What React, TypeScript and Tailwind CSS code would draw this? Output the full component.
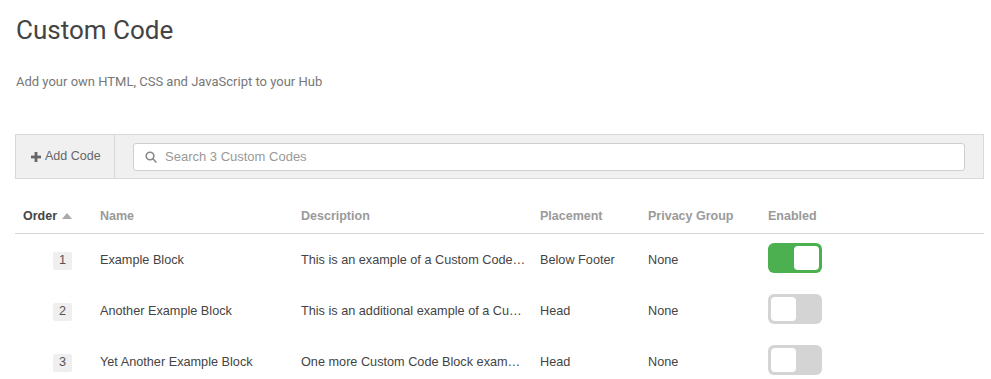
import React from "react";

const rows = [
  { order: 1, name: "Example Block", description: "This is an example of a Custom Code…", placement: "Below Footer", group: "None", enabled: true },
  { order: 2, name: "Another Example Block", description: "This is an additional example of a Cu…", placement: "Head", group: "None", enabled: false },
  { order: 3, name: "Yet Another Example Block", description: "One more Custom Code Block exam…", placement: "Head", group: "None", enabled: false },
];

function Toggle({ on }: { on: boolean }) {
  return (
    <div
      className={`mb-[6px] flex h-[30px] w-[54px] items-center rounded-[6px] p-[3px] ${
        on ? "justify-end bg-[#4caf50]" : "justify-start bg-[#d4d4d4]"
      }`}
    >
      <div className="h-[24px] w-[25px] rounded-[4px] bg-white" />
    </div>
  );
}

export default function App() {
  return (
    <div
      className="min-h-screen bg-white pl-[15px] pr-[7px] pt-[15px] text-[13px] text-[#444]"
      style={{ fontFamily: '"Liberation Sans", Arial, sans-serif' }}
    >
      <h1 className="pl-[1px] text-[26px] leading-[30px] text-[#444]" style={{ fontFamily: "Roboto, sans-serif" }}>
        Custom Code
      </h1>
      <p className="mt-[29px] pl-[1px] text-[13px] leading-[16px] text-[#777]" style={{ fontFamily: "Roboto, sans-serif" }}>
        Add your own HTML, CSS and JavaScript to your Hub
      </p>

      <div className="mt-[44px] flex h-[45px] items-stretch border border-[#d9d9d9] bg-[#f0f0f0]">
        <button className="flex w-[99px] items-center gap-[4px] border-r border-[#d9d9d9] pl-[15px] text-[12.5px] text-[#666]">
          <svg width="10" height="10" viewBox="0 0 10 10" className="mt-[1px]">
            <rect x="3.6" y="0" width="2.8" height="10" fill="#666" />
            <rect x="0" y="3.6" width="10" height="2.8" fill="#666" />
          </svg>
          Add Code
        </button>
        <div className="flex flex-1 items-center pl-[18px] pr-[18px]">
          <div className="flex h-[28px] w-full items-center gap-[8px] rounded-[3px] border border-[#cfcfcf] bg-white pl-[11px]">
            <svg width="12" height="12" viewBox="0 0 12 12" fill="none" stroke="#888" strokeWidth="1.6">
              <circle cx="5" cy="5" r="3.8" />
              <line x1="7.8" y1="7.8" x2="11" y2="11" strokeLinecap="round" />
            </svg>
            <span className="text-[13px] text-[#999]">Search 3 Custom Codes</span>
          </div>
        </div>
      </div>

      <div className="mt-[22px]">
        <div className="flex h-[33px] items-center border-b border-[#d6d6d6] pb-[2px] text-[12.5px] font-bold text-[#9a9a9a]">
          <div className="flex w-[85px] items-center gap-[5px] pl-[8px] text-[#444]">
            Order
            <svg width="10" height="6" viewBox="0 0 10 6">
              <polygon points="5,0 10,6 0,6" fill="#aaa" />
            </svg>
          </div>
          <div className="w-[201px]">Name</div>
          <div className="w-[239px]">Description</div>
          <div className="w-[108px]">Placement</div>
          <div className="w-[120px]">Privacy Group</div>
          <div>Enabled</div>
        </div>
        {rows.map((row) => (
          <div key={row.order} className="flex h-[51px] items-center pt-[2px] text-[12.7px] text-[#444]">
            <div className="w-[85px] pl-[38px]">
              <span className="flex h-[18px] w-[19px] items-center justify-center rounded-[2px] bg-[#efefef] text-[#555]">
                {row.order}
              </span>
            </div>
            <div className="w-[201px]">{row.name}</div>
            <div className="w-[239px]">{row.description}</div>
            <div className="w-[108px]">{row.placement}</div>
            <div className="w-[120px]">{row.group}</div>
            <div>
              <Toggle on={row.enabled} />
            </div>
          </div>
        ))}
      </div>
    </div>
  );
}
